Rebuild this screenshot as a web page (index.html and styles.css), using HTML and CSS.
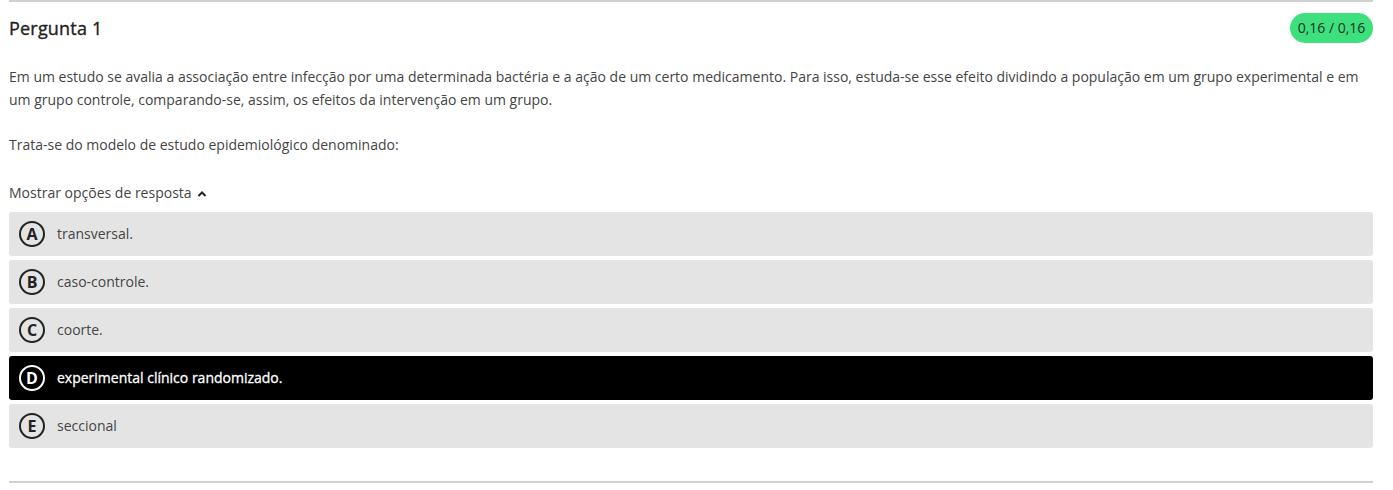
FILE: index.html
```html
<!DOCTYPE html>
<html lang="pt">
<head>
<meta charset="utf-8">
<link rel="stylesheet" href="styles.css">
</head>
<body>
<div class="question">
  <div class="header">
    <h2 class="title">Pergunta 1</h2>
    <span class="badge">0,16 / 0,16</span>
  </div>
  <p class="text">Em um estudo se avalia a associação entre infecção por uma determinada bactéria e a ação de um certo medicamento. Para isso, estuda-se esse efeito dividindo a população em um grupo experimental e em um grupo controle, comparando-se, assim, os efeitos da intervenção em um grupo.</p>
  <p class="text">Trata-se do modelo de estudo epidemiológico denominado:</p>
  <div class="toggle">Mostrar opções de resposta
    <svg class="chev" width="10" height="8" viewBox="0 0 10 8"><path d="M1.5 6 L5 2.5 L8.5 6" fill="none" stroke="#222" stroke-width="2"/></svg>
  </div>
  <div class="options">
    <div class="option"><span class="letter">A</span><span class="label">transversal.</span></div>
    <div class="option"><span class="letter">B</span><span class="label">caso-controle.</span></div>
    <div class="option"><span class="letter">C</span><span class="label">coorte.</span></div>
    <div class="option selected"><span class="letter">D</span><span class="label">experimental clínico randomizado.</span></div>
    <div class="option"><span class="letter">E</span><span class="label">seccional</span></div>
  </div>
</div>
</body>
</html>
```
FILE: styles.css
```css
html, body {
  margin: 0;
  padding: 0;
  background: #fff;
}
body {
  font-family: "Open Sans", "Noto Sans", sans-serif;
  color: #444;
}
.question {
  width: 1364px;
  margin-left: 9px;
  border-top: 2px solid #d0d0d0;
  border-bottom: 2px solid #d0d0d0;
  padding-bottom: 33px;
  box-sizing: border-box;
}
.header {
  display: flex;
  justify-content: space-between;
  align-items: center;
  padding-top: 11px;
  height: 30px;
}
.title {
  margin: 0;
  font-size: 18px;
  font-weight: 400;
  -webkit-text-stroke: 0.35px #222;
  letter-spacing: 0.2px;
  color: #222;
  line-height: 32px;
}
.badge {
  background: #3de07d;
  color: #1d3326;
  font-size: 14px;
  line-height: 30px;
  height: 30px;
  padding: 0 6px;
  border-radius: 15px;
  box-sizing: border-box;
  width: 83px;
  text-align: center;
}
.text {
  margin: 22px 0 0;
  font-size: 14px;
  line-height: 23px;
  color: #444;
}
.toggle {
  margin-top: 27px;
  font-size: 14px;
  line-height: 20px;
  color: #444;
  display: flex;
  align-items: center;
  gap: 5px;
}
.chev {
  display: block;
  margin-top: 1px;
}
.options {
  margin-top: 9px;
  display: flex;
  flex-direction: column;
  gap: 4px;
}
.option {
  height: 44px;
  background: #e4e4e4;
  border-radius: 3px;
  display: flex;
  align-items: center;
  padding-left: 10px;
  font-size: 14px;
  color: #444;
}
.label {
  margin-top: -1px;
}
.letter {
  width: 26px;
  height: 26px;
  box-sizing: border-box;
  border: 2px solid #222;
  border-radius: 50%;
  display: flex;
  align-items: center;
  justify-content: center;
  font-weight: 700;
  font-size: 16px;
  line-height: 1;
  color: #222;
  margin-right: 12px;
  padding-bottom: 1px;
}
.option.selected {
  background: #000;
  color: #fff;
}
.option.selected .letter {
  border-color: #fff;
  color: #fff;
}
.option.selected .label {
  font-weight: 400;
  -webkit-text-stroke: 0.3px #fff;
}
```
